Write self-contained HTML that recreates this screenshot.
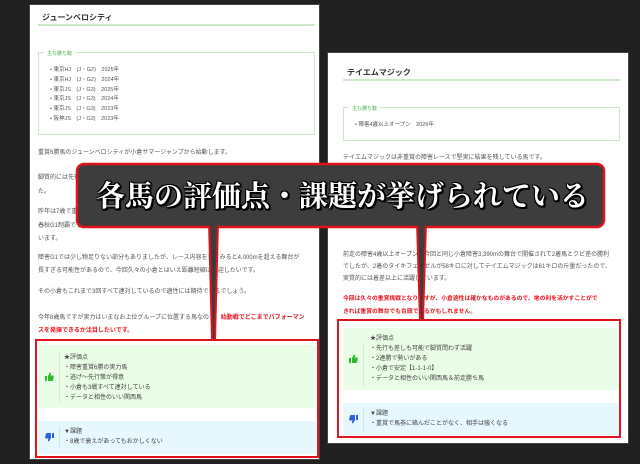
<!DOCTYPE html>
<html><head><meta charset="utf-8">
<style>
*{margin:0;padding:0;box-sizing:border-box}
body{width:640px;height:464px;background:#202020;position:relative;overflow:hidden;font-family:"Liberation Sans","Noto Sans CJK JP",sans-serif;color:#555}
.card{position:absolute;background:#fff;border:1px solid #444}
.t{position:absolute;font-size:6px;white-space:nowrap;line-height:9px}
.title{position:absolute;font-size:8px;font-weight:bold;color:#333;white-space:nowrap}
.gl{position:absolute;height:2px;background:#cfe8cc}
.fs{position:absolute;border:1px solid #cfe8cc}
.lg{position:absolute;font-size:5px;color:#4caf50;background:#fff;padding:0 3px;white-space:nowrap}
.red{color:#e8141c;font-weight:bold}
.rb{position:absolute;border:2.5px solid #e0141c}
.gb{position:absolute;background:#eafde6}
.bb{position:absolute;background:#e6f7fd}
.dv{position:absolute;width:1px;background:#d8e8d8}
.c{position:absolute;color:#444}
svg.i{position:absolute}
</style></head><body>

<!-- left card -->
<div class="card" style="left:29px;top:4px;width:291px;height:456px"></div>
<div class="title" style="left:42px;top:12px">ジューンベロシティ</div>
<div class="gl" style="left:38px;top:24px;width:277px"></div>
<div class="fs" style="left:38px;top:52px;width:277px;height:83px"></div>
<div class="lg" style="left:44px;top:50px">主な勝ち鞍</div>
<div class="t" style="left:50px;top:66px;line-height:9.8px;font-size:5.5px">• 東京HJ　(J・G2)　2025年<br>• 東京HJ　(J・G2)　2024年<br>• 東京JS　(J・G3)　2025年<br>• 東京JS　(J・G3)　2024年<br>• 東京JS　(J・G3)　2023年<br>• 阪神JS　(J・G3)　2023年</div>
<div class="t" style="left:38px;top:149px">重賞6勝馬のジューンベロシティが小倉サマージャンプから始動します。</div>
<div class="t" style="left:38px;top:171px;line-height:14px">脚質的には先行して粘り込むタイプで、これまでも安定した成績を残してきまし<br>た。</div>
<div class="t" style="left:38px;top:206px;line-height:13.5px">昨年は7歳で重賞を2勝して健在ぶりを示し、今年も中山グランドジャンプや<br>春秋G1制覇でも上位争いをしており、能力の高さはメンバー中でも上位と言えて<br>います。</div>
<div class="t" style="left:38px;top:252px;line-height:12.5px">障害G1では少し物足りない部分もありましたが、レース内容を見てみると4,000mを超える舞台が<br>長すぎる可能性があるので、今回久々の小倉とはいえ距離短縮は歓迎したいです。</div>
<div class="t" style="left:38px;top:288px">その小倉もこれまで3回すべて連対しているので適性には期待できるでしょう。</div>
<div class="t" style="left:38px;top:312px;line-height:12.5px">今年8歳馬ですが実力はいまなお上位グループに位置する馬なので、<span class="red">始動戦でどこまでパフォーマン</span><br><span class="red">スを発揮できるか注目したいです。</span></div>
<div class="gb" style="left:38px;top:345px;width:278px;height:63px"></div>
<div class="bb" style="left:38px;top:421px;width:278px;height:33px"></div>
<div class="dv" style="left:59px;top:352px;height:50px"></div>
<div class="dv" style="left:59px;top:426px;height:22px;background:#d0e4ec"></div>
<svg class="i" style="left:45px;top:372px" width="9" height="9" viewBox="0 0 9 9"><rect x="0" y="4" width="2" height="5" fill="#2db82d"/><path d="M3 4 L5 0.5 Q6 0.5 6 2 L5.6 3.5 H8.3 Q9 3.8 8.8 4.6 L8 8.4 Q7.8 9 7 9 H3 Z" fill="#2db82d"/></svg>
<svg class="i" style="left:45px;top:433px" width="9" height="9" viewBox="0 0 9 9"><g transform="rotate(180 4.5 4.5)"><rect x="0" y="4" width="2" height="5" fill="#2c5fd8"/><path d="M3 4 L5 0.5 Q6 0.5 6 2 L5.6 3.5 H8.3 Q9 3.8 8.8 4.6 L8 8.4 Q7.8 9 7 9 H3 Z" fill="#2c5fd8"/></g></svg>
<div class="t c" style="left:64px;top:353px;line-height:10px">★評価点<br>・障害重賞6勝の実力馬<br>・逃げ～先行策が得意<br>・小倉も3戦すべて連対している<br>・データと相性のいい関西馬</div>
<div class="t c" style="left:64px;top:427px;line-height:10px">▼課題<br>・8歳で衰えがあってもおかしくない</div>
<div class="rb" style="left:35px;top:339px;width:284px;height:119px"></div>

<!-- right card -->
<div class="card" style="left:327px;top:52px;width:302px;height:392px"></div>
<div class="title" style="left:347px;top:67px">テイエムマジック</div>
<div class="gl" style="left:343px;top:79px;width:277px"></div>
<div class="fs" style="left:343px;top:107px;width:277px;height:34px"></div>
<div class="lg" style="left:349px;top:105px">主な勝ち鞍</div>
<div class="t" style="left:355px;top:121px;font-size:5.5px">• 障害4歳以上オープン　2026年</div>
<div class="t" style="left:343px;top:154px">テイエムマジックは非重賞の障害レースで堅実に結果を残している馬です。</div>
<div class="t" style="left:343px;top:179px">これまで障害戦では安定した成績を残しており、前走では重賞級のメンバー相手にも差し</div>
<div class="t" style="left:343px;top:214px">のない走りを見せ、着実に力をつけてきている印象がありますので期待したいところこと</div>
<div class="t" style="left:343px;top:249px;line-height:12px">前走の障害4歳以上オープンは今回と同じ小倉障害3,390mの舞台で開催されて2着馬とクビ差の勝利<br>でしたが、2着のタイキフェンゼルが58キロに対してテイエムマジックは61キロの斤量だったので、<br>実質的には着差以上に活躍しています。</div>
<div class="t red" style="left:343px;top:293px;line-height:13px;font-size:5.8px">今回は久々の重賞挑戦となりますが、小倉適性は確かなものがあるので、地の利を活かすことがで<br>きれば重賞の舞台でも台頭できるかもしれません。</div>
<div class="gb" style="left:343px;top:328px;width:275px;height:62px"></div>
<div class="bb" style="left:343px;top:403px;width:275px;height:32px"></div>
<div class="dv" style="left:363px;top:344px;height:42px"></div>
<div class="dv" style="left:363px;top:409px;height:22px;background:#d0e4ec"></div>
<svg class="i" style="left:349px;top:354px" width="9" height="9" viewBox="0 0 9 9"><rect x="0" y="4" width="2" height="5" fill="#2db82d"/><path d="M3 4 L5 0.5 Q6 0.5 6 2 L5.6 3.5 H8.3 Q9 3.8 8.8 4.6 L8 8.4 Q7.8 9 7 9 H3 Z" fill="#2db82d"/></svg>
<svg class="i" style="left:349px;top:415px" width="9" height="9" viewBox="0 0 9 9"><g transform="rotate(180 4.5 4.5)"><rect x="0" y="4" width="2" height="5" fill="#2c5fd8"/><path d="M3 4 L5 0.5 Q6 0.5 6 2 L5.6 3.5 H8.3 Q9 3.8 8.8 4.6 L8 8.4 Q7.8 9 7 9 H3 Z" fill="#2c5fd8"/></g></svg>
<div class="t c" style="left:370px;top:334px;line-height:10px">★評価点<br>・先行も差しも可能で脚質問わず活躍<br>・2連勝で勢いがある<br>・小倉で安定【1-1-1-0】<br>・データと相性のいい関西馬＆前走勝ち馬</div>
<div class="t c" style="left:370px;top:409px;line-height:10px">▼課題<br>・重賞で馬券に絡んだことがなく、相手は強くなる</div>
<div class="rb" style="left:337px;top:319px;width:284px;height:119px"></div>

<!-- callout -->
<svg style="position:absolute;left:0;top:0" width="640" height="464">
  <polygon points="209,222 218,222 215,340 212,340" fill="#3d3d3d" stroke="#e0141c" stroke-width="2"/>
  <polygon points="417,222 426,222 423,320 420,320" fill="#3d3d3d" stroke="#e0141c" stroke-width="2"/>
  <rect x="77" y="164" width="527" height="63" rx="7" fill="#3d3d3d" stroke="#e0141c" stroke-width="2.5"/>
  <rect x="210" y="220" width="7" height="8" fill="#3d3d3d"/>
  <rect x="418" y="220" width="7" height="8" fill="#3d3d3d"/>
</svg>
<div style="position:absolute;left:96px;top:176px;width:500px;font-family:'Noto Serif CJK SC','Noto Serif CJK JP',serif;font-weight:bold;font-size:29px;line-height:38px;color:#fff;white-space:nowrap;text-shadow:2px 2px 0 #000,-1px -1px 0 #000,1px -1px 0 #000,-1px 1px 0 #000,2px 0 0 #000,0 2px 0 #000">各馬の評価点・課題が挙げられている</div>
</body></html>
